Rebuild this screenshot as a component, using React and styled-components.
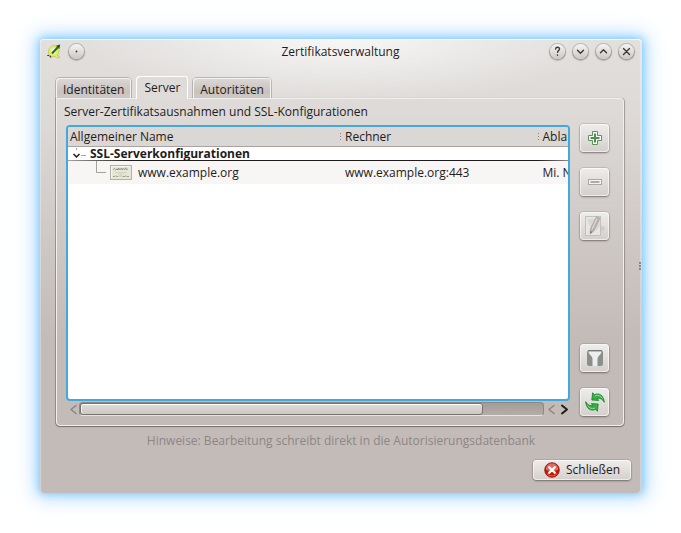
import React from "react";
import styled, { createGlobalStyle, css } from "styled-components";

const Global = createGlobalStyle`
  * { box-sizing: border-box; }
  body {
    margin: 0;
    background: #fff;
    color: #1f1c1b;
    font: 12px/16px "Open Sans", "Noto Sans", sans-serif;
  }
  button { font: inherit; color: inherit; padding: 0; margin: 0; border: 0; }
  svg { display: block; flex: none; }
`;

const Desktop = styled.div`
  display: flex;
  min-height: 100vh;
  padding: 39px 39px 40px 40px;
`;

const Window = styled.main`
  position: relative;
  flex: 1;
  min-width: 0;
  display: flex;
  flex-direction: column;
  border-radius: 4px;
  padding: 0 11px 13px 16px;
  background:
    radial-gradient(ellipse 260px 64px at 50% 0, rgba(255, 255, 255, 0.75), rgba(255, 255, 255, 0)),
    linear-gradient(#e2dfdd 0, #dcd9d6 80px, #c3bbb8 300px, #c3bbb8 100%);
  box-shadow:
    inset 0 1px 0 rgba(255, 255, 255, 0.8),
    inset 1px 0 0 rgba(255, 255, 255, 0.3),
    inset -2px 0 0 rgba(255, 255, 255, 0.3),
    0 0 7px 0 rgba(95, 195, 255, 0.8),
    0 0 14px 3px rgba(120, 200, 255, 0.55),
    0 0 24px 7px rgba(180, 215, 255, 0.4);
`;

const TitleBar = styled.header`
  display: grid;
  grid-template-columns: 1fr auto 1fr;
  align-items: center;
  height: 25px;
  margin: 0 -3px 0 -9px;
`;

const Title = styled.h1`
  margin: 0;
  font-size: 12px;
  font-weight: 400;
`;

const TitleGroup = styled.div`
  display: flex;
  align-items: center;
  gap: 8px;
  justify-content: ${(p) => (p.$end ? "flex-end" : "flex-start")};
`;

const RoundButton = styled.button`
  width: 15px;
  height: 15px;
  border-radius: 50%;
  display: grid;
  place-items: center;
  background: linear-gradient(#f6f5f4, #cbc8c5);
  box-shadow: 0 0 0 1px rgba(120, 115, 112, 0.35), 0 1px 1px 1px rgba(60, 55, 52, 0.25);
`;

const Tabs = styled.div`
  display: flex;
  align-items: flex-end;
  gap: 5px;
  margin-top: 12px;
`;

const Tab = styled.button`
  height: 20px;
  padding: 3px 7px 0;
  border-radius: 4px 4px 0 0;
  background: linear-gradient(#dcd8d6, #c8c2bf 70%, #cfcac7);
  box-shadow: inset 1px 1px 0 #f4f3f2, inset -1px 0 0 #f4f3f2, 0 0 0 1px rgba(120, 112, 108, 0.4);
  ${(p) =>
    p.$active &&
    css`
      position: relative;
      height: 23px;
      margin-bottom: -1px;
      padding: 2px 8px 1px;
      background: #dedbd9;
      box-shadow: inset 1px 1px 0 #fff, inset -1px 0 0 #fff;
    `}
`;

const Panel = styled.section`
  flex: 1;
  display: flex;
  flex-direction: column;
  margin-right: 7px;
  border: 1px solid #f1efee;
  border-radius: 0 4px 4px 4px;
  padding: 5px 14px 9px 7px;
  box-shadow: 0 1px 1px rgba(70, 60, 58, 0.6), 1px 0 1px rgba(90, 80, 78, 0.4), -1px 0 0 rgba(110, 100, 98, 0.5);
`;

const Caption = styled.p`
  margin: 0 0 4px;
`;

const Body = styled.div`
  flex: 1;
  display: flex;
  gap: 10px;
  padding-left: 2px;
`;

const ListColumn = styled.div`
  flex: 1;
  min-width: 0;
  display: flex;
  flex-direction: column;
  padding-top: 1px;
`;

const ListFrame = styled.div`
  flex: 1;
  overflow: hidden;
  border: 2px solid #43a8da;
  border-radius: 4px;
  background: #fff;
`;

const Table = styled.table`
  width: 100%;
  table-layout: fixed;
  border-spacing: 0;
  white-space: nowrap;
`;

const HeadCell = styled.th`
  width: ${(p) => p.$width};
  height: 20px;
  padding: 0 0 0 2px;
  overflow: hidden;
  text-align: left;
  font-weight: 400;
  border-bottom: 1px solid #a8a3a0;
  background:
    ${(p) => (p.$grip ? "repeating-linear-gradient(#8d8885 0 1px, transparent 1px 3px) right 2px top 6px / 1px 8px no-repeat," : "")}
    #dbd7d4;
`;

const GroupCell = styled.td`
  height: 14px;
  padding: 0;
  line-height: 14px;
  font-weight: 700;
  background: linear-gradient(90deg, #a8a3a0, #1f1c1b 12%, #1f1c1b 94%, #8d8885) left bottom / 100% 1px no-repeat;
`;

const Cell = styled.td`
  height: 23px;
  padding: ${(p) => (p.$tree ? "0" : "1px 0 0 2px")};
  overflow: hidden;
  background: #f7f6f5;
`;

const TreeItem = styled.div`
  display: flex;
  align-items: center;
  gap: 4px;
  padding-left: ${(p) => (p.$nested ? "28px" : "0")};
`;

const ScrollRow = styled.div`
  display: flex;
  align-items: center;
  height: 16px;
  margin-bottom: -1px;
`;

const Arrow = styled.button`
  width: 13px;
  height: 15px;
  display: grid;
  place-items: center;
  background: none;
  color: ${(p) => (p.$dim ? "#8a8380" : "#1f1c1b")};
`;

const Track = styled.div`
  flex: 1;
  border: 1px solid #8e8784;
  border-bottom-color: #e6e3e1;
  border-radius: 4px;
  background: linear-gradient(#a49c99, #b3aca8);
`;

const Thumb = styled.div`
  width: 87%;
  height: 12px;
  border: 1px solid #777270;
  border-radius: 3px;
  background: linear-gradient(#dedbd8, #cdc9c5);
  box-shadow: inset 0 1px 0 #fff, inset 1px 0 0 #f4f3f2;
`;

const Tools = styled.div`
  display: flex;
  flex-direction: column;
  gap: 16px;
`;

const raised = css`
  border-radius: 4px;
  background: linear-gradient(#efedeb, #d3cfcc);
  box-shadow: inset 0 0 0 1px rgba(255, 255, 255, 0.6), 0 0 0 1px rgba(120, 112, 108, 0.2), 0 1px 2px 0 rgba(70, 60, 58, 0.6);
`;

const ToolButton = styled.button`
  ${raised}
  width: 29px;
  height: 28px;
  display: grid;
  place-items: center;
  margin-top: ${(p) => (p.$push ? "auto" : "0")};
`;

const Hint = styled.p`
  margin: 7px 5px 11px 0;
  text-align: center;
  color: #8b8786;
`;

const CloseButton = styled.button`
  ${raised}
  align-self: flex-end;
  display: flex;
  align-items: center;
  gap: 6px;
  height: 20px;
  padding: 0 11px;
`;

const SideGrip = styled.div`
  position: absolute;
  right: 1px;
  top: 50%;
  width: 2px;
  height: 8px;
  margin-top: -4px;
  background: repeating-linear-gradient(#8d8784 0 2px, transparent 2px 3px);
`;

const Stroke = ({ d, size = 15, width = 1.4, color = "#3b3836" }) => (
  <svg width={size} height={size} viewBox="0 0 15 15" fill="none" stroke={color} strokeWidth={width} strokeLinecap="round" strokeLinejoin="round">
    <path d={d} />
  </svg>
);

const AppIcon = () => (
  <svg width="14" height="15" viewBox="0 0 14 15">
    <path d="M7 1.600C3.600 1.600 1.600 4.600 1.600 8c0 3 1.600 4.600 4 4.600 1 0 1.700-.2 2.300-.6.7 1.300 2.100 2.200 4.300 1.900l.3-1.500c-1.200 0-1.900-.6-2.300-1.400C11.400 9.700 12 8 12 5.900 12 3.200 10 1.600 7 1.600z" fill="#e6ec6a" stroke="#b9c23c" strokeWidth=".7" />
    <path d="M7 4C5.200 4 4.200 5.800 4.200 7.800c0 1.600.6 2.500 1.700 2.500C8 10.300 9.300 8.500 9.300 6.300 9.300 4.800 8.500 4 7 4z" fill="#f2f2d8" />
    <path d="M5 9.500 10.800 3.300" stroke="#1c6b2c" strokeWidth="2" />
    <path d="M9 1.800 13.200.4 12.400 5z" fill="#15592a" />
    <path d="M.3 11.500h1.800M2.900 11.800l.9 1.700" stroke="#2b3020" strokeWidth="1.200" />
  </svg>
);

const CertificateIcon = () => (
  <svg width="24" height="15" viewBox="0 0 24 15">
    <rect x=".5" y=".5" width="21" height="14" fill="#e6e7d6" stroke="#b3b3a4" />
    <path d="M1.500 13V1.500H20.500" fill="none" stroke="#f6f6ec" />
    <path d="M3.500 5c.3-1.800 1.300-1.800 1.600-1M5 4.500l1 .5 1-1.200.8 1.200.8-2 .5 1.800 1-1.300.8 1.300 1-1.600.6 1.600 1.100-1.300.9 1.300 1.200-2 .7 2 1.600-1" fill="none" stroke="#7b7f70" strokeWidth=".7" />
    <path d="M5 7.500h12M8 9h6" stroke="#c9cabb" strokeWidth=".7" />
    <path d="M3 11.500h2l.8-.8.8.8h1.800M12.500 11.500h2.500l1-.8.8.8h2.200" fill="none" stroke="#8f917f" strokeWidth=".8" />
    <circle cx="10.500" cy="11" r="1.300" fill="#d3d3ba" />
  </svg>
);

const PlusIcon = () => (
  <svg width="16" height="16" viewBox="0 0 16 16">
    <path d="M5.500 1.500h5v4h4v5h-4v4h-5v-4h-4v-5h4z" fill="#fff" stroke="#5c9358" />
    <path d="M8 3.500v9M3.500 8h9" stroke="#4f8f4c" strokeWidth="2" />
  </svg>
);

const MinusIcon = () => (
  <svg width="16" height="16" viewBox="0 0 16 16">
    <rect x="1.500" y="5.500" width="13" height="5" fill="#f5f4f4" stroke="#aaa7a7" />
    <path d="M3.500 8h9" stroke="#aeaaaa" strokeWidth="2" />
  </svg>
);

const EditIcon = () => (
  <svg width="22" height="22" viewBox="0 0 22 22">
    <ellipse cx="15.500" cy="13.500" rx="5" ry="2.800" fill="#c9c6c4" opacity=".8" />
    <rect x="1.500" y="1.500" width="15" height="19" fill="#e8e6e5" stroke="#c3c0be" />
    <path d="M3 4.500c4-1 9-1 13 1v6L9 18z" fill="#dad8d6" />
    <path d="M12.500 1.500l3.500 1.800-6 12.200-3.800 3.500.2-5z" fill="#b7b4b2" stroke="#a3a09e" strokeWidth=".7" />
    <path d="M13 3.500 8.200 14" stroke="#dad8d6" strokeWidth="1.200" />
    <path d="M6.200 19l.2-3 2 1z" fill="#777472" />
  </svg>
);

const FilterIcon = () => (
  <svg width="16" height="16" viewBox="0 0 16 16">
    <rect width="16" height="16" rx="2.500" fill="#8b8e89" />
    <path d="M1 .5h14" stroke="#787b76" />
    <path d="M1.500 1.500h13c0 3-4 4.500-4 7.500v7h-5V9c0-3-4-4.500-4-7.500z" fill="#eceeee" />
  </svg>
);

const RefreshIcon = () => (
  <svg width="20" height="20" viewBox="0 0 20 20">
    <g fill="#35b044" stroke="#16802a" strokeWidth=".8" strokeLinejoin="round">
      <path d="M6.800 8 7.600.8 9.500 2.600C14 .6 18.700 3 19.300 10.300 17.300 7 14.800 5.800 12 6.400l1.800 2z" />
      <path d="M13.200 12 12.400 19.200 10.500 17.400C6 19.400 1.300 17 .7 9.700 2.700 13 5.200 14.200 8 13.600L6.200 11.600z" />
    </g>
    <path d="M10 3.800c3.500-1 6 .2 7.400 2.700M10 16.200c-3.500 1-6-.2-7.400-2.700" fill="none" stroke="#8fe08a" strokeWidth="1" />
  </svg>
);

const CloseIcon = () => (
  <svg width="16" height="16" viewBox="0 0 16 16">
    <circle cx="8" cy="8" r="7.300" fill="#c41a0c" stroke="#8e1209" strokeWidth=".8" />
    <path d="M1.800 7.500a6.200 6.200 0 0 1 12.400 0C11 9.500 5 9.500 1.800 7.500z" fill="#e58a78" opacity=".75" />
    <path d="M3 11.500c2.500 3.300 7.500 3.300 10 0" fill="none" stroke="#ee5a28" strokeWidth="1.200" />
    <path d="M5.200 5.200l5.600 5.600M10.800 5.200l-5.600 5.600" stroke="#fff" strokeWidth="2.200" strokeLinecap="round" />
  </svg>
);

const BranchIcon = () => (
  <svg width="18" height="13" viewBox="0 0 18 13">
    <path d="M8.500 0v2M13 7.500h6" stroke="#a5a19e" />
    <path d="M5.500 6l3 3 3-3" fill="none" stroke="#1f1c1b" strokeWidth="1.500" />
  </svg>
);

const LeafIcon = () => (
  <svg width="10" height="23" viewBox="0 0 10 23">
    <path d="M.5 0v11.500H10" fill="none" stroke="#a5a19e" />
  </svg>
);

const windowControls = [
  ["Hilfe", "M5.600 5c.2-2.400 4.100-2.300 3.900.1 0 1.400-1.900 1.500-1.900 3.200M7.500 11v.2"],
  ["Minimieren", "M4.500 6.300l3 3 3-3"],
  ["Maximieren", "M4.500 8.700l3-3 3 3"],
  ["Fenster schließen", "M4.500 4.500l6 6M10.500 4.500l-6 6"],
];

const LEFT = "M10 3.500l-5 4 5 4";
const RIGHT = "M5 3.500l5 4-5 4";

export default function App() {
  return (
    <Desktop>
      <Global />
      <Window>
        <TitleBar>
          <TitleGroup>
            <AppIcon />
            <RoundButton aria-label="Fenstermenü">
              <Stroke d="M7.500 7.500v.1" width={1.8} />
            </RoundButton>
          </TitleGroup>
          <Title>Zertifikatsverwaltung</Title>
          <TitleGroup $end>
            {windowControls.map(([label, d]) => (
              <RoundButton key={label} aria-label={label}>
                <Stroke d={d} />
              </RoundButton>
            ))}
          </TitleGroup>
        </TitleBar>

        <Tabs role="tablist">
          <Tab role="tab" aria-selected={false}>Identitäten</Tab>
          <Tab role="tab" aria-selected $active>Server</Tab>
          <Tab role="tab" aria-selected={false}>Autoritäten</Tab>
        </Tabs>

        <Panel role="tabpanel">
          <Caption>Server-Zertifikatsausnahmen und SSL-Konfigurationen</Caption>
          <Body>
            <ListColumn>
              <ListFrame>
                <Table>
                  <thead>
                    <tr>
                      <HeadCell $width="55%" $grip>Allgemeiner Name</HeadCell>
                      <HeadCell $width="39.5%" $grip>Rechner</HeadCell>
                      <HeadCell $width="5.5%">Abla</HeadCell>
                    </tr>
                  </thead>
                  <tbody>
                    <tr>
                      <GroupCell colSpan={3}>
                        <TreeItem>
                          <BranchIcon />
                          SSL-Serverkonfigurationen
                        </TreeItem>
                      </GroupCell>
                    </tr>
                    <tr>
                      <Cell $tree>
                        <TreeItem $nested>
                          <LeafIcon />
                          <CertificateIcon />
                          www.example.org
                        </TreeItem>
                      </Cell>
                      <Cell>www.example.org:443</Cell>
                      <Cell>Mi. N</Cell>
                    </tr>
                  </tbody>
                </Table>
              </ListFrame>
              <ScrollRow>
                <Arrow $dim aria-label="Nach links">
                  <Stroke d={LEFT} color="currentColor" />
                </Arrow>
                <Track>
                  <Thumb />
                </Track>
                <Arrow $dim aria-label="Zurück">
                  <Stroke d={LEFT} color="currentColor" />
                </Arrow>
                <Arrow aria-label="Nach rechts">
                  <Stroke d={RIGHT} color="currentColor" width={2} />
                </Arrow>
              </ScrollRow>
            </ListColumn>
            <Tools>
              <ToolButton aria-label="Hinzufügen"><PlusIcon /></ToolButton>
              <ToolButton aria-label="Entfernen" disabled><MinusIcon /></ToolButton>
              <ToolButton aria-label="Bearbeiten" disabled><EditIcon /></ToolButton>
              <ToolButton aria-label="Filtern" $push><FilterIcon /></ToolButton>
              <ToolButton aria-label="Aktualisieren"><RefreshIcon /></ToolButton>
            </Tools>
          </Body>
        </Panel>

        <Hint>Hinweise: Bearbeitung schreibt direkt in die Autorisierungsdatenbank</Hint>
        <CloseButton>
          <CloseIcon />
          Schließen
        </CloseButton>
        <SideGrip />
      </Window>
    </Desktop>
  );
}
